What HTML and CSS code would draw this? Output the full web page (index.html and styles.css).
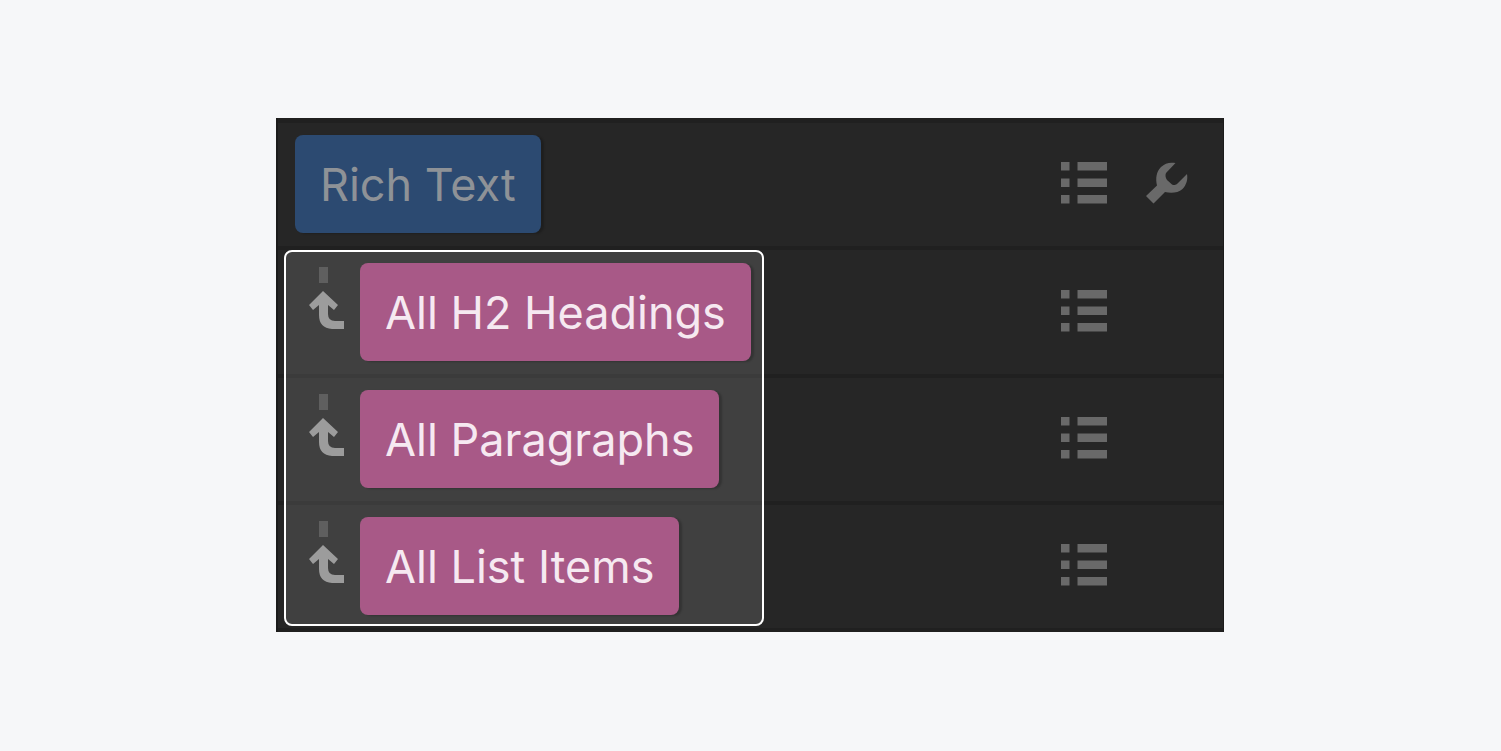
FILE: index.html
```html
<!DOCTYPE html>
<html lang="en">
<head>
<meta charset="utf-8">
<meta name="viewport" content="width=device-width, initial-scale=1">
<title>Selector inheritance</title>
<link rel="stylesheet" href="styles.css">
</head>
<body>
<svg class="symbols" aria-hidden="true">
  <symbol id="list" viewBox="0 0 46 42">
    <path d="M0 0h8.500v8.500H0zM16.500 0h29.500v8.500H16.500zM0 16.500h8.500v8.500H0zM16.500 16.500h29.500v8.500H16.500zM0 33h8.500v8.500H0zM16.500 33h29.500v8.500H16.500z"/>
  </symbol>
  <symbol id="wrench" viewBox="0 0 42 42">
    <path d="M0 34L11 23.500C9.500 17 10 10 15 5C19 1 24 0 29.500 1L20 11C19 13 19.500 16 21 18L26 22.500C28 23.500 30 23 31.500 21.500L41 12C42 17 40.500 23 36.500 27C32 31 25 31.500 19 30L7.500 41.500z"/>
  </symbol>
  <symbol id="inherit" viewBox="0 0 36 62">
    <path class="stem" d="M10 0h9v16h-9z"/>
    <path d="M14 24L29 38L25 43L19 38V47Q19 54 26 54H35V62H23Q10 61 10 48V38L4 43L0 38z"/>
  </symbol>
</svg>
<main class="stage">
  <section class="panel" aria-label="Selector inheritance">
    <div class="row">
      <button class="tag tag-element" type="button">Rich Text</button>
      <div class="actions">
        <button class="icon" type="button" aria-label="Show styles"><svg class="list"><use href="#list"/></svg></button>
        <button class="icon" type="button" aria-label="Settings"><svg class="wrench"><use href="#wrench"/></svg></button>
      </div>
    </div>
    <div class="nested">
      <div class="row">
        <svg class="inherit" aria-hidden="true"><use href="#inherit"/></svg>
        <button class="tag" type="button">All H2 Headings</button>
        <div class="actions"><button class="icon" type="button" aria-label="Show styles"><svg class="list"><use href="#list"/></svg></button></div>
      </div>
      <div class="row">
        <svg class="inherit" aria-hidden="true"><use href="#inherit"/></svg>
        <button class="tag" type="button">All Paragraphs</button>
        <div class="actions"><button class="icon" type="button" aria-label="Show styles"><svg class="list"><use href="#list"/></svg></button></div>
      </div>
      <div class="row">
        <svg class="inherit" aria-hidden="true"><use href="#inherit"/></svg>
        <button class="tag" type="button">All List Items</button>
        <div class="actions"><button class="icon" type="button" aria-label="Show styles"><svg class="list"><use href="#list"/></svg></button></div>
      </div>
      <div class="highlight"></div>
    </div>
  </section>
</main>
</body>
</html>
```

FILE: styles.css
```css
* {
  box-sizing: border-box;
}

body {
  margin: 0;
  background: #f6f7f9;
  font-family: Inter, "Liberation Sans", sans-serif;
}

.symbols {
  position: absolute;
  width: 0;
  height: 0;
}

.stem {
  opacity: 0.35;
}

.stage {
  display: flex;
  min-height: 100vh;
  align-items: center;
  justify-content: center;
  padding: 24px 25px 25px 24px;
}

.panel {
  width: 100%;
  max-width: 948px;
  border: solid #1b1b1b;
  border-width: 0 1px 0 2px;
  background: #262626;
  box-shadow: inset 0 5px #202020;
  padding-top: 5px;
}

.row {
  display: flex;
  align-items: center;
  gap: 16px;
  padding: 12px 35px 13px 17px;
  border-bottom: 4px solid #202020;
}

.nested {
  position: relative;
  padding-top: 1px;
}

.nested .row {
  padding-left: 31px;
}

.tag {
  position: relative;
  z-index: 1;
  padding: 22px 25px 20px;
  border: 0;
  border-radius: 8px;
  background: #a85987;
  box-shadow: 3px 1px 2px rgb(0 0 0 / 20%);
  color: #f6e9f1;
  font: 400 45px/56px Inter, "Liberation Sans", sans-serif;
  white-space: nowrap;
}

.tag-element {
  background: #2c4a71;
  color: #8e9297;
}

.inherit {
  position: relative;
  z-index: 1;
  flex: none;
  width: 36px;
  height: 62px;
  margin-right: -1px;
  margin-bottom: 28px;
  fill: #9c9c9c;
}

.actions {
  display: grid;
  grid-template-columns: 46px 42px;
  gap: 39px;
  align-items: center;
  margin-bottom: 2px;
  margin-left: auto;
}

.icon {
  padding: 0;
  border: 0;
  background: none;
  fill: #696969;
}

.icon svg {
  display: block;
}

.list {
  width: 46px;
  height: 42px;
}

.wrench {
  width: 42px;
  height: 42px;
}

.highlight {
  position: absolute;
  top: 0;
  left: 6px;
  bottom: 6px;
  width: 480px;
  border: 2px solid #fff;
  border-radius: 8px;
  background: rgb(255 255 255 / 12%);
  pointer-events: none;
}
```
